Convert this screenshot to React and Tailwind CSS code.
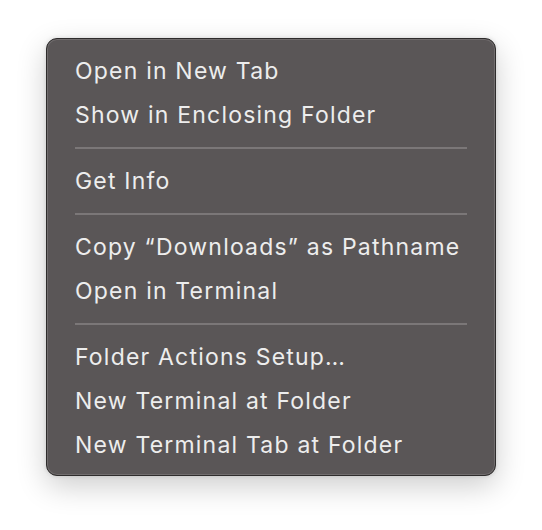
import React from 'react';

const groups = [
  ['Open in New Tab', 'Show in Enclosing Folder'],
  ['Get Info'],
  ['Copy \u201cDownloads\u201d as Pathname', 'Open in Terminal'],
  ['Folder Actions Setup\u2026', 'New Terminal at Folder', 'New Terminal Tab at Folder'],
];

const App = () => {
  return (
    <div className="w-[542px] h-[530px] bg-white pt-[38px] pl-[46px]" style={{ fontFamily: 'Inter, "Noto Sans", sans-serif' }}>
      <div className="w-[450px] h-[438px] rounded-[11px] bg-[#5a5657] border border-[#2e2c2c] shadow-[inset_0_0_0_1px_#716d6e,0_10px_30px_rgba(0,0,0,0.2),0_0_4px_rgba(0,0,0,0.12)] pt-[10px] px-[28px]">
        {groups.map((group, gi) => (
          <div key={gi}>
            {gi > 0 && (
              <div className="h-[22px] flex items-center">
                <div className="h-[2px] w-full bg-[#7b7778]" />
              </div>
            )}
            {group.map((label) => (
              <div key={label} className="h-[44px] flex items-center text-[23px] text-[#ededed] tracking-[1.2px]">
                {label}
              </div>
            ))}
          </div>
        ))}
      </div>
    </div>
  );
};

export default App;
